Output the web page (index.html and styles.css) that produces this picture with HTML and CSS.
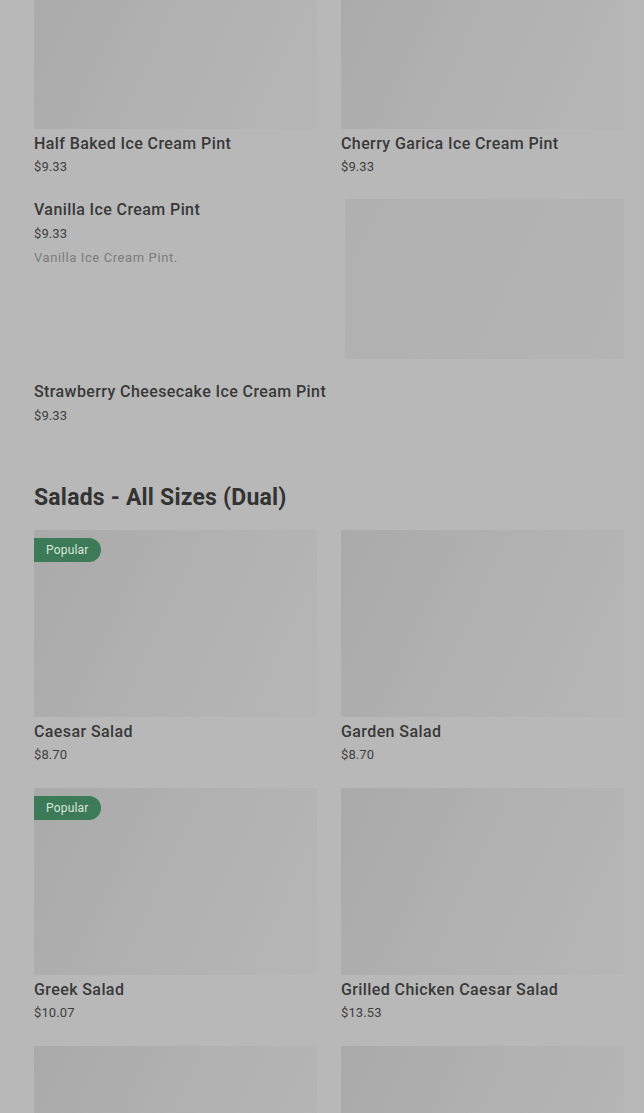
FILE: index.html
```html
<!DOCTYPE html>
<html lang="en">
<head>
    <meta charset="UTF-8">
    <meta name="viewport" content="width=device-width, initial-scale=1.0">
    <title>Menu</title>
    <link rel="stylesheet" href="styles.css">
</head>
<body>
    <div class="page">
        <div class="grid">
            <div class="card">
                <div class="thumb"></div>
                <div class="name">Half Baked Ice Cream Pint</div>
                <div class="price">$9.33</div>
            </div>
            <div class="card">
                <div class="thumb"></div>
                <div class="name">Cherry Garica Ice Cream Pint</div>
                <div class="price">$9.33</div>
            </div>
        </div>

        <div class="row">
            <div class="row-info">
                <div class="name">Vanilla Ice Cream Pint</div>
                <div class="price">$9.33</div>
                <div class="desc">Vanilla Ice Cream Pint.</div>
            </div>
            <div class="row-thumb"></div>
        </div>

        <div class="row row-plain">
            <div class="row-info">
                <div class="name">Strawberry Cheesecake Ice Cream Pint</div>
                <div class="price">$9.33</div>
            </div>
        </div>

        <h2 class="section-title">Salads - All Sizes (Dual)</h2>

        <div class="grid">
            <div class="card">
                <div class="thumb"><span class="badge">Popular</span></div>
                <div class="name">Caesar Salad</div>
                <div class="price">$8.70</div>
            </div>
            <div class="card">
                <div class="thumb"></div>
                <div class="name">Garden Salad</div>
                <div class="price">$8.70</div>
            </div>
            <div class="card">
                <div class="thumb"><span class="badge">Popular</span></div>
                <div class="name">Greek Salad</div>
                <div class="price">$10.07</div>
            </div>
            <div class="card">
                <div class="thumb"></div>
                <div class="name">Grilled Chicken Caesar Salad</div>
                <div class="price">$13.53</div>
            </div>
            <div class="card">
                <div class="thumb"></div>
            </div>
            <div class="card">
                <div class="thumb"></div>
            </div>
        </div>
    </div>
</body>
</html>
```

FILE: styles.css
```css
body {
    margin: 0;
    padding: 0;
    background-color: #b8b8b8;
    font-family: Roboto, 'Liberation Sans', sans-serif;
    color: #363636;
    overflow: hidden;
}
.page {
    padding: 0 20px 0 34px;
    margin-top: -58px;
}
.grid {
    display: grid;
    grid-template-columns: 283px 283px;
    column-gap: 24px;
    row-gap: 23px;
}
.thumb {
    position: relative;
    height: 187px;
    border-radius: 2px;
    background: linear-gradient(115deg, #aaaaaa 0%, #b1b1b1 50%, #b6b6b6 100%);
}
.name {
    margin-top: 5px;
    font-size: 16px;
    font-weight: 500;
    line-height: 20px;
    letter-spacing: 0.4px;
    color: #393939;
}
.price {
    margin-top: 3px;
    font-size: 13px;
    line-height: 20px;
    letter-spacing: 0.1px;
    color: #3f3f3f;
}
.desc {
    margin-top: 4px;
    font-size: 13px;
    line-height: 20px;
    letter-spacing: 0.6px;
    color: #7c7c7c;
}
.row {
    display: flex;
    justify-content: space-between;
    margin-top: 22px;
}
.row .name {
    margin-top: 1px;
}
.row .price {
    margin-top: 4px;
}
.row-thumb {
    width: 279px;
    height: 160px;
    border-radius: 2px;
    background: linear-gradient(115deg, #b0b0b0 0%, #b4b4b4 100%);
}
.row-plain {
    margin-top: 22px;
}
.section-title {
    margin: 58px 0 18px;
    font-size: 23px;
    font-weight: 700;
    line-height: 28px;
    letter-spacing: 0.2px;
    color: #333;
}
.badge {
    position: absolute;
    top: 8px;
    left: 0;
    padding: 0 12px;
    height: 24px;
    line-height: 24px;
    border-radius: 0 12px 12px 0;
    background-color: #3d7a58;
    color: #d6e6da;
    font-size: 12px;
    letter-spacing: 0.2px;
}
```
